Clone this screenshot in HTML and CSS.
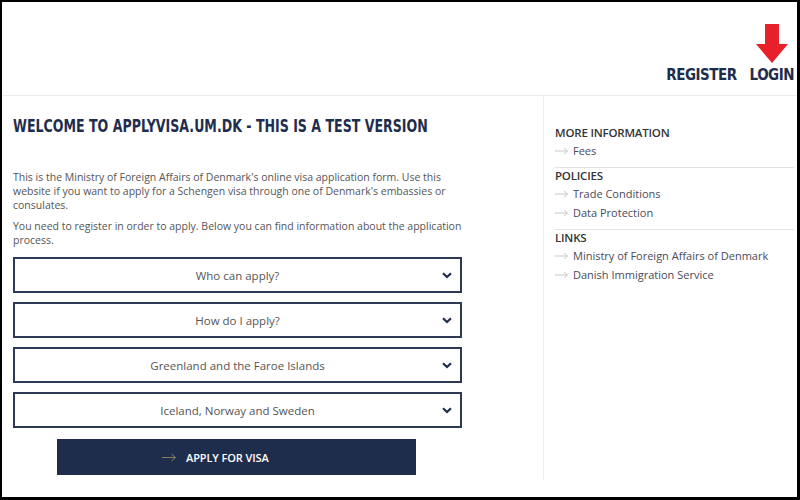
FILE: index.html
```html
<!DOCTYPE html>
<html lang="en">
<head>
<meta charset="utf-8">
<title>applyvisa.um.dk</title>
<link rel="stylesheet" href="styles.css">
</head>
<body>
<div class="frame">
  <header class="header">
    <nav class="topnav">
      <a class="toplink" href="#">REGISTER</a>
      <a class="toplink login" href="#">
        <svg class="arrow" width="32" height="39" viewBox="0 0 32 39"><path d="M9 0 H23 V20 H32 L16 39 L0 20 H9 Z" fill="#e8202a"/></svg>
        LOGIN
      </a>
    </nav>
  </header>
  <main class="main">
    <section class="content">
      <h1 class="title"><span class="title-text">WELCOME TO APPLYVISA.UM.DK - THIS IS A TEST VERSION</span></h1>
      <p class="text">This is the Ministry of Foreign Affairs of Denmark's online visa application form. Use this website if you want to apply for a Schengen visa through one of Denmark's embassies or consulates.</p>
      <p class="text">You need to register in order to apply. Below you can find information about the application process.</p>
      <div class="accordion">
        <div class="acc-item"><span>Who can apply?</span><svg class="chev" width="10" height="7" viewBox="0 0 10 7"><path d="M1 1.2 L5 5 L9 1.2" fill="none" stroke="#1f2d4d" stroke-width="2.2"/></svg></div>
        <div class="acc-item"><span>How do I apply?</span><svg class="chev" width="10" height="7" viewBox="0 0 10 7"><path d="M1 1.2 L5 5 L9 1.2" fill="none" stroke="#1f2d4d" stroke-width="2.2"/></svg></div>
        <div class="acc-item"><span>Greenland and the Faroe Islands</span><svg class="chev" width="10" height="7" viewBox="0 0 10 7"><path d="M1 1.2 L5 5 L9 1.2" fill="none" stroke="#1f2d4d" stroke-width="2.2"/></svg></div>
        <div class="acc-item"><span>Iceland, Norway and Sweden</span><svg class="chev" width="10" height="7" viewBox="0 0 10 7"><path d="M1 1.2 L5 5 L9 1.2" fill="none" stroke="#1f2d4d" stroke-width="2.2"/></svg></div>
      </div>
      <div class="btn-row">
        <a class="btn" href="#"><svg class="btn-arrow" width="15" height="9" viewBox="0 0 15 9"><path d="M0 4.5 H13 M9.5 1 L13.5 4.5 L9.5 8" fill="none" stroke="#8a7f66" stroke-width="1"/></svg>APPLY FOR VISA</a>
      </div>
    </section>
    <aside class="sidebar">
      <div class="group">
        <h2 class="group-title">MORE INFORMATION</h2>
        <a class="link" href="#"><svg class="link-arrow" width="14" height="8" viewBox="0 0 14 8"><path d="M0 4 H12.5 M9 1 L12.5 4 L9 7" fill="none" stroke="#c8c8c8" stroke-width="1"/></svg>Fees</a>
      </div>
      <div class="group">
        <h2 class="group-title">POLICIES</h2>
        <a class="link" href="#"><svg class="link-arrow" width="14" height="8" viewBox="0 0 14 8"><path d="M0 4 H12.5 M9 1 L12.5 4 L9 7" fill="none" stroke="#c8c8c8" stroke-width="1"/></svg>Trade Conditions</a>
        <a class="link" href="#"><svg class="link-arrow" width="14" height="8" viewBox="0 0 14 8"><path d="M0 4 H12.5 M9 1 L12.5 4 L9 7" fill="none" stroke="#c8c8c8" stroke-width="1"/></svg>Data Protection</a>
      </div>
      <div class="group">
        <h2 class="group-title">LINKS</h2>
        <a class="link" href="#"><svg class="link-arrow" width="14" height="8" viewBox="0 0 14 8"><path d="M0 4 H12.5 M9 1 L12.5 4 L9 7" fill="none" stroke="#c8c8c8" stroke-width="1"/></svg>Ministry of Foreign Affairs of Denmark</a>
        <a class="link" href="#"><svg class="link-arrow" width="14" height="8" viewBox="0 0 14 8"><path d="M0 4 H12.5 M9 1 L12.5 4 L9 7" fill="none" stroke="#c8c8c8" stroke-width="1"/></svg>Danish Immigration Service</a>
      </div>
    </aside>
  </main>
</div>
</body>
</html>
```

FILE: styles.css
```css
* { box-sizing: border-box; }
html, body { margin: 0; padding: 0; background: #fff; }
body { font-family: "Open Sans", "Noto Sans", sans-serif; color: #555; }
a { text-decoration: none; }

.frame {
  width: 800px;
  height: 500px;
  border: 2px solid #000;
  border-right-width: 3px;
  border-bottom-width: 3px;
  display: flex;
  flex-direction: column;
  overflow: hidden;
}

.header {
  height: 94px;
  border-bottom: 1px solid #ebebeb;
  display: flex;
  justify-content: flex-end;
  align-items: flex-end;
  padding: 0 3px 12px 0;
  flex: none;
}
.topnav { display: flex; align-items: flex-end; gap: 13px; }
.toplink {
  font-family: "DejaVu Sans Condensed", "DejaVu Sans", sans-serif;
  font-stretch: condensed;
  font-weight: bold;
  font-size: 15px;
  line-height: 15px;
  color: #1f2d4d;
  letter-spacing: -0.5px;
}
.login { display: flex; flex-direction: column; align-items: center; }
.arrow { margin-bottom: 5px; }

.main { flex: 1; display: flex; padding-bottom: 17px; }

.content {
  width: 542px;
  border-right: 1px solid #ececec;
  padding: 19px 81px 0 11px;
  flex: none;
}
.title {
  margin: 0 0 33px;
  font-family: "DejaVu Sans Condensed", "DejaVu Sans", sans-serif;
  font-stretch: condensed;
  font-weight: bold;
  font-size: 17.5px;
  line-height: 22px;
  color: #1f2d4d;
  white-space: nowrap;
}
.title-text {
  display: inline-block;
  transform: scaleX(0.8);
  transform-origin: left center;
}
.text {
  margin: 0 0 7px;
  font-size: 10.5px;
  line-height: 14px;
  color: #555;
}
.accordion { display: flex; flex-direction: column; gap: 9px; margin-top: 10px; }
.acc-item {
  position: relative;
  height: 36px;
  border: 2px solid #2c3a55;
  display: flex;
  align-items: center;
  justify-content: center;
  font-size: 11.5px;
  color: #555;
}
.chev { position: absolute; right: 8px; top: 13px; }

.btn-row { padding: 11px 0 0 44px; }
.btn {
  width: 359px;
  height: 36px;
  background: #1f2d4d;
  display: flex;
  align-items: center;
  padding-left: 105px;
  color: #fff;
  font-size: 11px;
  font-weight: 600;
  letter-spacing: -0.1px;
}
.btn-arrow { margin-right: 9px; }

.sidebar { flex: 1; padding: 29px 3px 0 11px; }
.group { border-bottom: 1px solid #e3e3e3; padding-bottom: 7px; }
.group:last-child { border-bottom: none; }
.group-title {
  margin: 0;
  font-size: 11.5px;
  font-weight: 600;
  color: #333;
  line-height: 16px;
  letter-spacing: -0.2px;
}
.link {
  display: flex;
  align-items: center;
  font-size: 11px;
  line-height: 19px;
  color: #4a4a5a;
}
.link-arrow { margin-right: 4px; }
```
